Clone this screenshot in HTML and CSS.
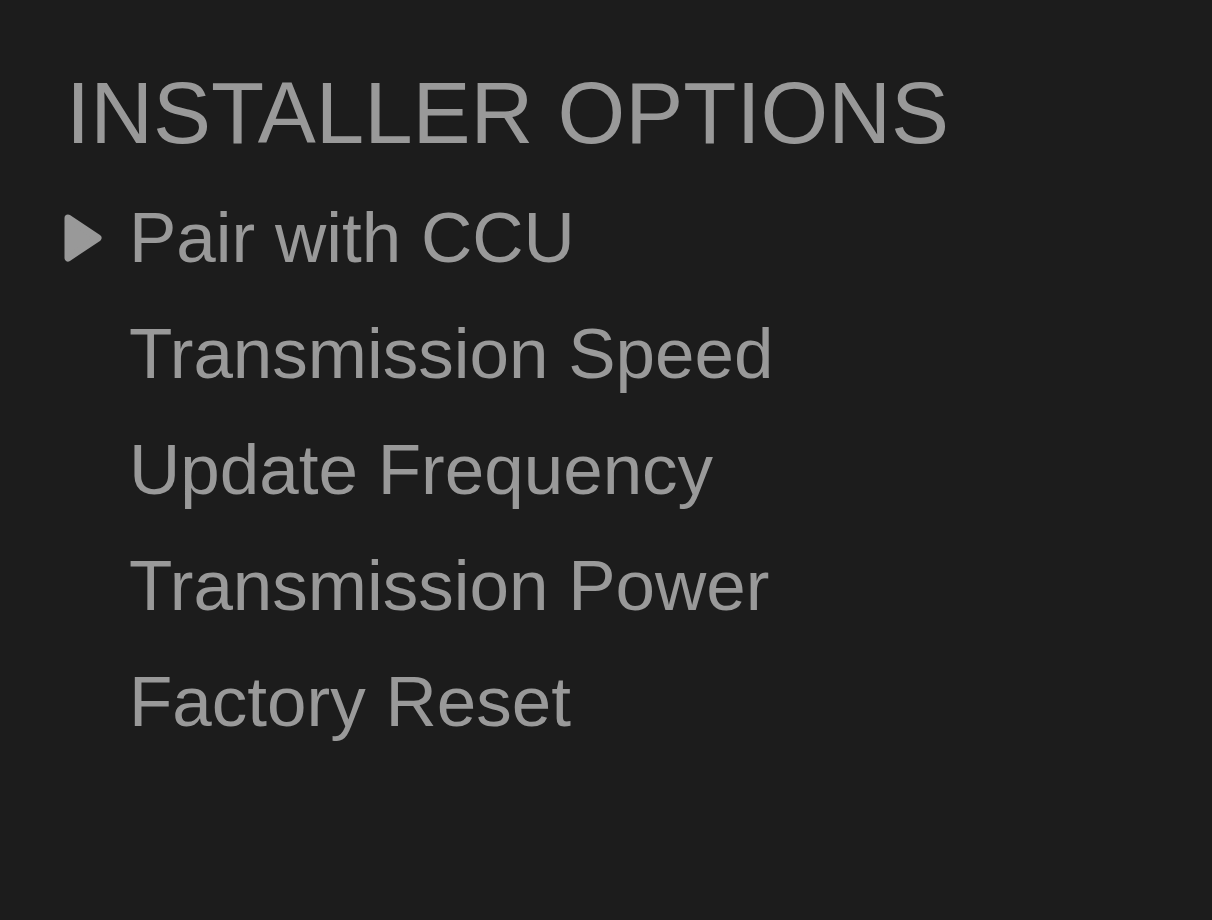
FILE: index.html
```html
<!DOCTYPE html>
<html>
<head>
	<title>Installer Options</title>
	<link rel="stylesheet" href="styles.css">
</head>
<body>
	<div id="screen">
		<h1>INSTALLER OPTIONS</h1>
		<!-- menu entries, the first one is selected -->
		<ul id="menu">
			<li class="item selected">
				<span class="marker">
					<svg width="38" height="48" viewBox="0 0 38 48"><path d="M4 4 L34 24 L4 44 Z" fill="#999" stroke="#999" stroke-width="7" stroke-linejoin="round"/></svg>
				</span>
				Pair with CCU
			</li>
			<li class="item"><span class="marker"></span>Transmission Speed</li>
			<li class="item"><span class="marker"></span>Update Frequency</li>
			<li class="item"><span class="marker"></span>Transmission Power</li>
			<li class="item"><span class="marker"></span>Factory Reset</li>
		</ul>
	</div>
</body>
</html>
```

FILE: styles.css
```css
html, body{
	margin: 0;
	background-color: #1c1c1c;
}
body{
	font-family: "Liberation Sans", Helvetica, Arial, sans-serif;
	color: #999;
}
#screen{
	padding: 63px 0 0 64px;
}
h1{
	margin: 0 0 17px 2px;
	font-size: 87px;
	font-weight: normal;
	line-height: 100px;
}
#menu{
	list-style: none;
	margin: 0;
	padding: 0;
}
.item{
	display: flex;
	align-items: center;
	font-size: 71px;
	line-height: 116px;
	height: 116px;
}
.marker{
	display: flex;
	align-items: center;
	width: 65px;
	flex-shrink: 0;
}
```
